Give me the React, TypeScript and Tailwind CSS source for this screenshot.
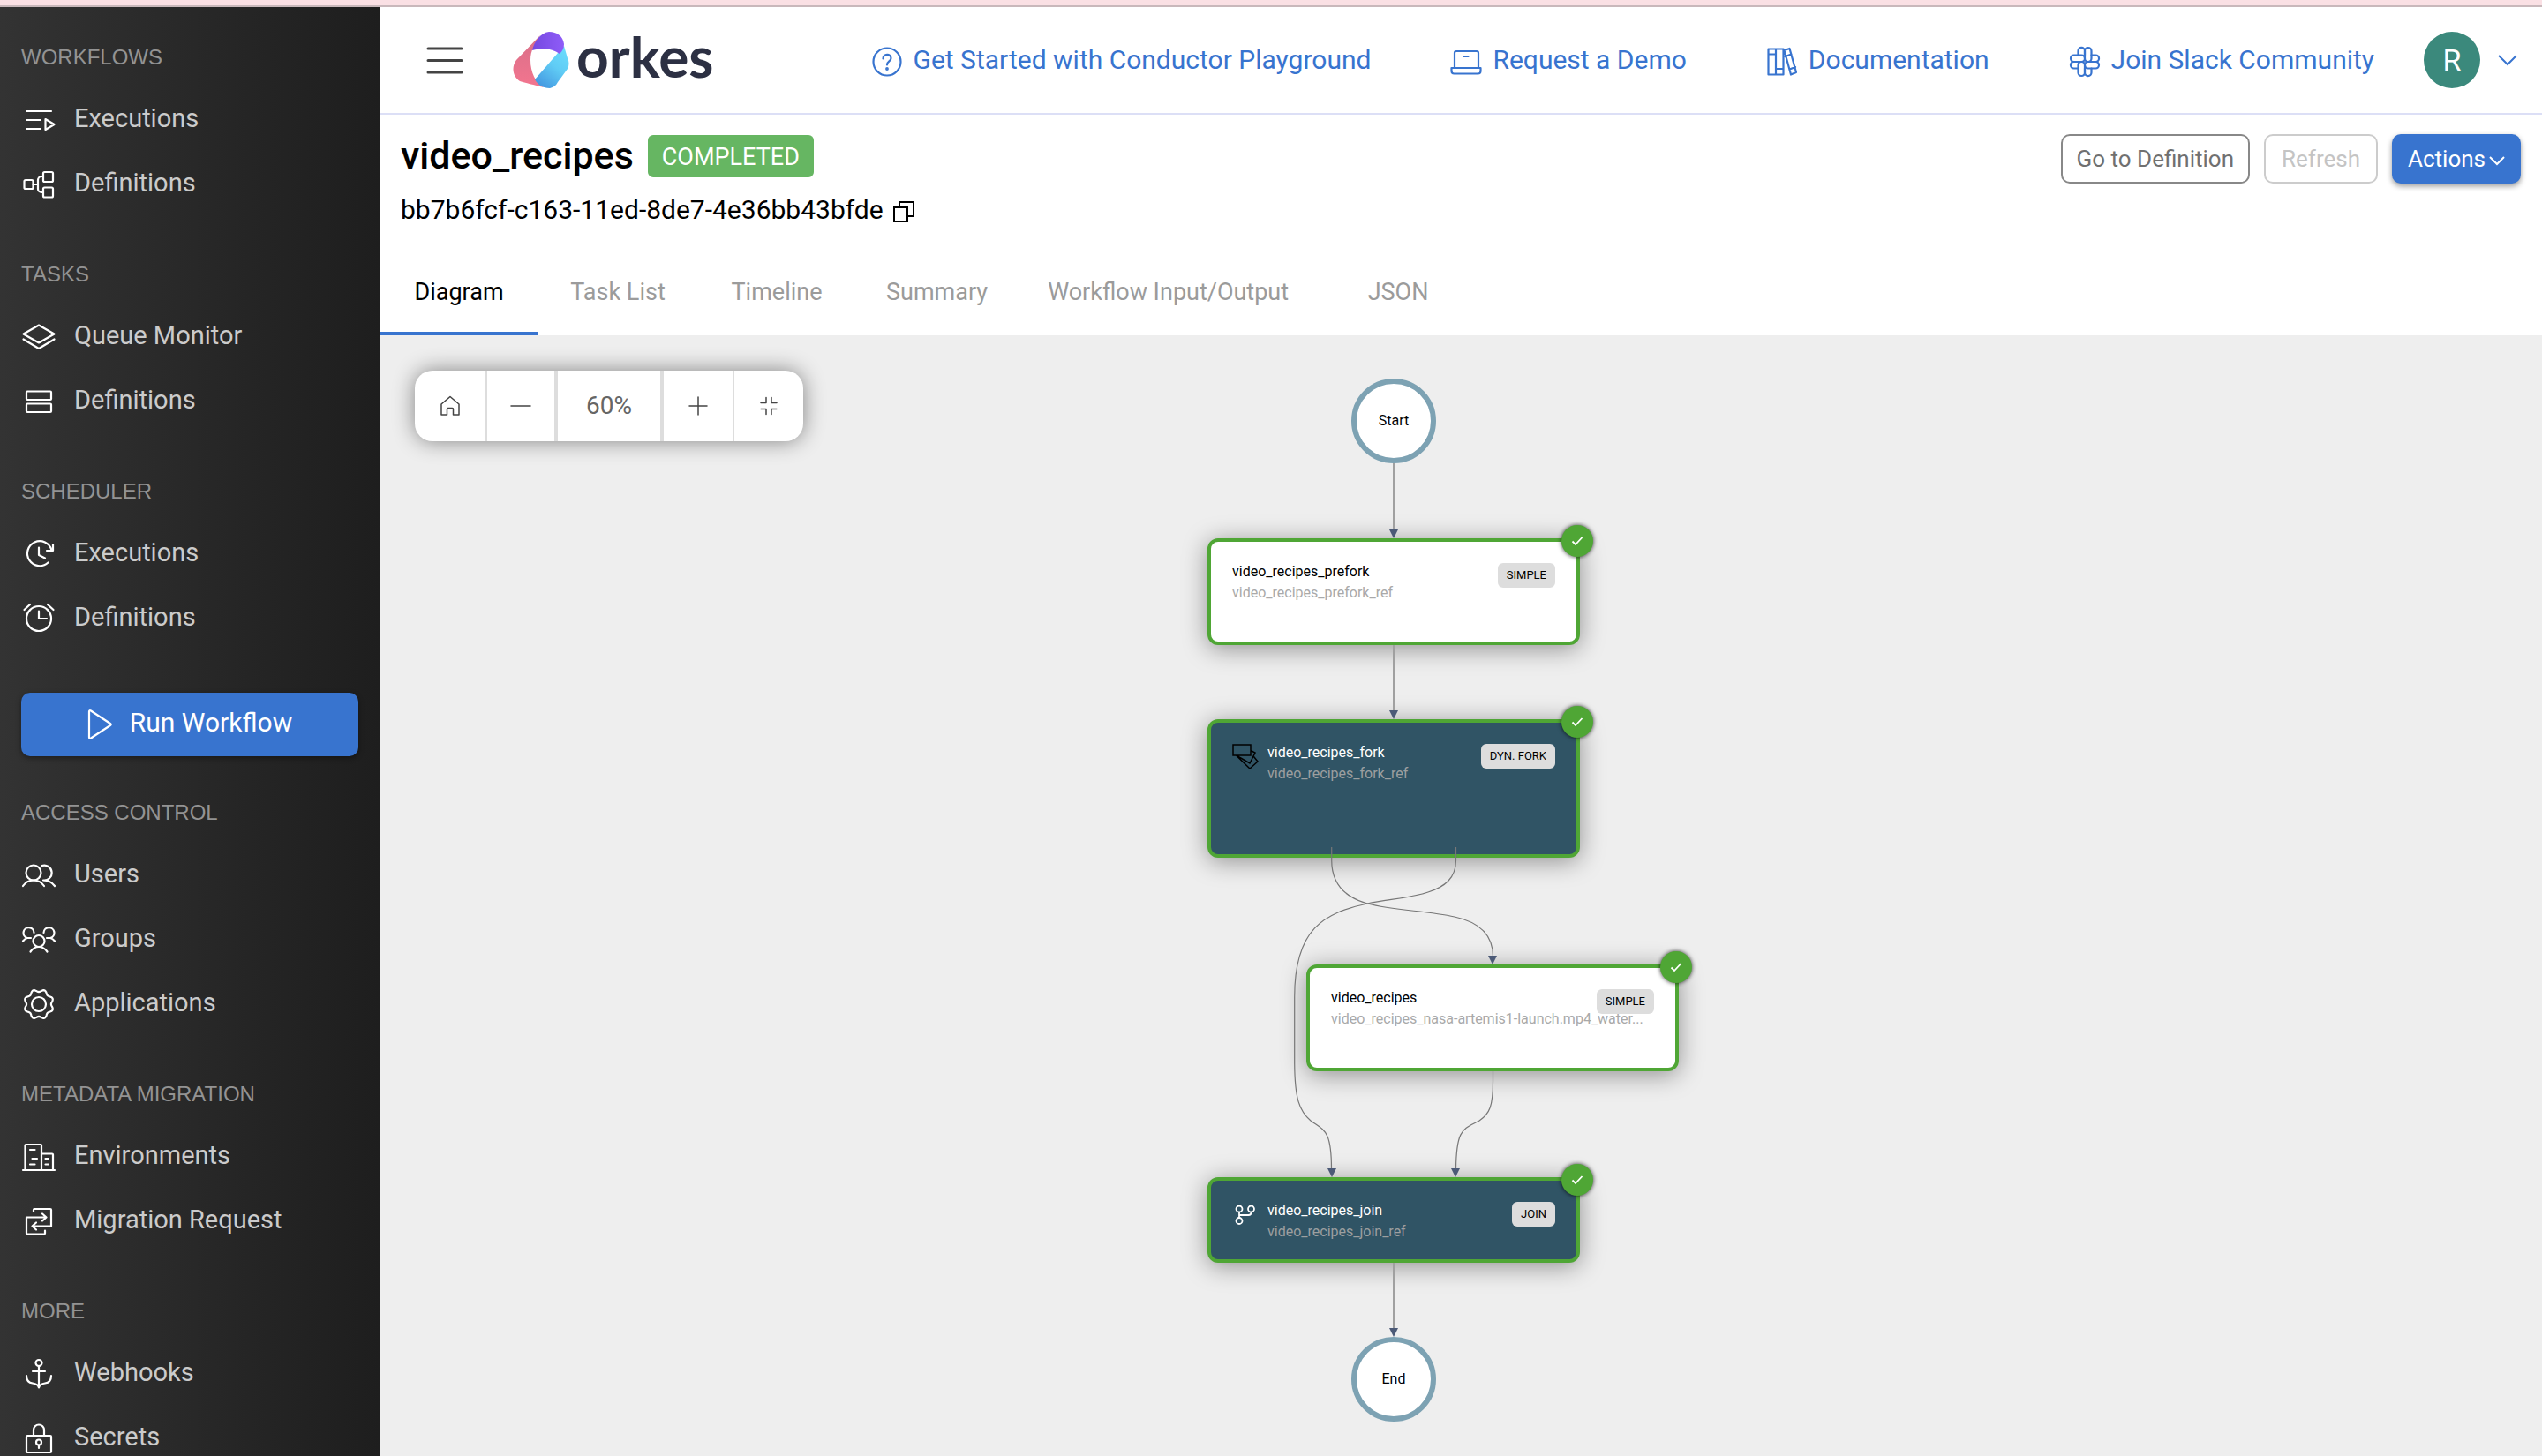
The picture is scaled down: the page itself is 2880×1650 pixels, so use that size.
import React from "react";

type IconProps = { children: React.ReactNode; className?: string; box?: string; weight?: number };

function Icon({ children, className = "size-10", box = "0 0 40 40", weight = 2.2 }: IconProps) {
  return (
    <svg viewBox={box} className={"shrink-0 " + className} fill="none" stroke="currentColor" strokeWidth={weight} strokeLinecap="round" strokeLinejoin="round" aria-hidden="true">
      {children}
    </svg>
  );
}

const gearPath =
  Array.from({ length: 96 }, (_, i) => {
    const a = (i / 96) * Math.PI * 2;
    const r = 15.4 + 1.5 * Math.cos(8 * a + Math.PI);
    return (i ? "L" : "M") + (20 + r * Math.cos(a)).toFixed(2) + " " + (20 + r * Math.sin(a)).toFixed(2);
  }).join("") + "Z";

const icons = {
  runs: <path d="M6 10H34M6 20H22M6 30H22M27.5 19L37.5 25L27.5 31Z" />,
  flow: (
    <>
      <rect x="3.5" y="15" width="10" height="10" rx="1.5" />
      <rect x="25" y="6" width="11" height="11" rx="1.5" />
      <rect x="25" y="23.5" width="11" height="11" rx="1.5" />
      <path d="M13.5 20H19M25 11H23a4 4 0 0 0-4 4V25a4 4 0 0 0 4 4H25" />
    </>
  ),
  layers: <path d="M20 6.500L37.500 16.500L20 26.500L2.500 16.500ZM2.500 22.500L20 33L37.500 22.500" />,
  rows: (
    <>
      <rect x="6" y="8.500" width="28" height="9.500" rx="1" />
      <rect x="6" y="22.500" width="28" height="9.500" rx="1" />
    </>
  ),
  rerun: <path d="M30.500 29.500A14 14 0 1 1 34.500 15.500M36 9V16H29M20 12.500V21L27 24.500" />,
  alarm: (
    <>
      <circle cx="20" cy="20" r="14" />
      <path d="M20 11.500V20H29M3.500 10L10 4M30 4L36.500 10" />
    </>
  ),
  users: (
    <>
      <circle cx="14" cy="17" r="8.500" />
      <path d="M2 32C5 27.500 9 25.500 14 25.500S23 27.500 26 32M23.500 9a8.500 8.500 0 1 1 1.500 16.500M25 25.500C31 25.500 35 28 38 32" />
    </>
  ),
  groups: (
    <>
      <circle cx="20" cy="21.500" r="6.500" />
      <path d="M10.500 33.500C13 30 16 28 20 28S27 30 29.500 33.500" />
      <path d="M14.500 12A6 6 0 1 0 7 18C5 18.500 3.500 19.500 2 21.500M7 18H11" />
      <path d="M25.500 12A6 6 0 1 1 33 18C35 18.500 36.500 19.500 38 21.500M33 18H29" />
    </>
  ),
  gear: (
    <>
      <path d={gearPath} />
      <circle cx="20" cy="20" r="8" />
    </>
  ),
  buildings: <path d="M2 35H38M4.500 35V7a1 1 0 0 1 1-1H22a1 1 0 0 1 1 1V35M23 16.500H35a1 1 0 0 1 1 1V35M10 12H15.500M12.500 22H18M10 28.500H15.500M27.500 22H31M27.500 28.500H31" />,
  migrate: <path d="M14 9V7a1 1 0 0 1 1-1H33a1 1 0 0 1 1 1V25.500H13M17 21.500L12.500 25.500L17 29.500M27 30.500V33.500a1 1 0 0 1-1 1H7a1 1 0 0 1-1-1V15.500H28M24 11.500L28.500 15.500L24 19.500" />,
  anchor: (
    <>
      <circle cx="20" cy="7.500" r="3.500" />
      <path d="M20 11V35M13 17H27M6 22C6 27 8.500 30 13 30.500C17 31 19 32 20 35.500C21 32 23 31 27 30.500C31.500 30 34 27 34 22" />
    </>
  ),
  lock: (
    <>
      <rect x="6" y="17" width="28" height="19" rx="1" />
      <path d="M14 17V10.500a6 6 0 0 1 12 0V17M20 27.500V31" />
      <circle cx="20" cy="24.500" r="3" />
    </>
  ),
};

type IconName = keyof typeof icons;
type Section = { title: string; items: [IconName, string][] };

const upper: Section[] = [
  { title: "WORKFLOWS", items: [["runs", "Executions"], ["flow", "Definitions"]] },
  { title: "TASKS", items: [["layers", "Queue Monitor"], ["rows", "Definitions"]] },
  { title: "SCHEDULER", items: [["rerun", "Executions"], ["alarm", "Definitions"]] },
];

const lower: Section[] = [
  { title: "ACCESS CONTROL", items: [["users", "Users"], ["groups", "Groups"], ["gear", "Applications"]] },
  { title: "METADATA MIGRATION", items: [["buildings", "Environments"], ["migrate", "Migration Request"]] },
  { title: "MORE", items: [["anchor", "Webhooks"], ["lock", "Secrets"]] },
];

function NavSection({ title, items }: Section) {
  return (
    <section>
      <h2 className="mb-[18px] h-8 font-['Liberation_Sans',sans-serif] text-2xl leading-8 text-[#939393]">{title}</h2>
      <ul>
        {items.map(([icon, label]) => (
          <li key={label}>
            <a href="#" className="flex h-[73px] items-center gap-5 text-[#cbcbcb]">
              <Icon className="size-10 text-white">{icons[icon]}</Icon>
              <span className="pb-1 text-[29px] leading-10">{label}</span>
            </a>
          </li>
        ))}
      </ul>
    </section>
  );
}

function Sidebar() {
  return (
    <nav className="flex w-[430px] shrink-0 flex-col gap-[50px] overflow-hidden bg-linear-to-r from-[#333333] to-[#1e1e1e] px-6 pt-[41px]">
      {upper.map((s) => <NavSection key={s.title} {...s} />)}
      <button type="button" className="-my-0.5 flex h-18 shrink-0 items-center justify-center gap-5 rounded-[10px] bg-[#3874cf] text-[30px] text-white shadow-[0_2px_6px_rgba(0,0,0,0.4)]">
        <Icon className="h-9 w-7" box="0 0 28 36"><path d="M2 3.500C2 2 3 2 4 2.500L26 17C27 17.700 27 18.300 26 19L4 33.500C3 34 2 34 2 32.500Z" /></Icon>
        <span className="pb-1.5">Run Workflow</span>
      </button>
      {lower.map((s) => <NavSection key={s.title} {...s} />)}
    </nav>
  );
}

function Logo() {
  return (
    <a href="#" className="flex items-center gap-2" aria-label="orkes">
      <svg viewBox="0 0 64 64" className="size-16" aria-hidden="true">
        <defs>
          <linearGradient id="logo-blue" x1="0.2" y1="1" x2="0.8" y2="0">
            <stop offset="0" stopColor="#4396e0" />
            <stop offset="0.55" stopColor="#60ccf5" />
            <stop offset="1" stopColor="#6bdcfc" />
          </linearGradient>
          <linearGradient id="logo-pink" x1="0" y1="0" x2="0" y2="1">
            <stop offset="0" stopColor="#d86f88" />
            <stop offset="1" stopColor="#f3758f" />
          </linearGradient>
          <linearGradient id="logo-violet" x1="0" y1="0" x2="1" y2="0">
            <stop offset="0" stopColor="#7549e0" />
            <stop offset="1" stopColor="#8f5cf8" />
          </linearGradient>
        </defs>
        <path d="M31 4L4 32C-2 40 0 51 8 56C14 58 24 60 35 63C26 58 20 46 20 32C20 27 21 22 23 19Z" fill="url(#logo-pink)" />
        <path d="M58 16L25 54C28 60 34 64 42 64C46 63 49 61 51 57L62 42C64 38 64 34 62 30Z" fill="url(#logo-blue)" />
        <path d="M22 21C24 12 31 1 41 0C50 0 57 5 58 14C58 19 56 22 53 25C45 19 34 18 22 21Z" fill="url(#logo-violet)" />
      </svg>
      <span className="pb-2 font-['Lato',sans-serif] text-[64px] leading-16 font-bold text-[#2c3043]">orkes</span>
    </a>
  );
}

const links = [
  {
    label: "Get Started with Conductor Playground",
    icon: (
      <>
        <circle cx="18" cy="18" r="15.500" />
        <path d="M13.500 14.500C13.500 8.500 22.500 8.500 22.500 14C22.500 17.500 18 17.500 18 21.500" />
        <circle cx="18" cy="26" r="0.800" fill="currentColor" />
      </>
    ),
  },
  {
    label: "Request a Demo",
    icon: <path d="M5 25V8a2 2 0 0 1 2-2H30a2 2 0 0 1 2 2V25M1.500 25H34.500V28.500a3 3 0 0 1-3 3H4.500a3 3 0 0 1-3-3ZM15.500 12H20.500" />,
  },
  {
    label: "Documentation",
    icon: <path d="M2.500 3.500H11V32.500H2.500ZM11 3.500H19.500V32.500H11ZM2.500 9.500H11M11 26H19.500M20.500 5L26.500 3L34 30L28 32.500ZM21.500 12L28.500 9.500M26.500 26.500L33 24" />,
  },
  {
    label: "Join Slack Community",
    icon: (
      <>
        <rect x="18" y="2" width="7.500" height="16" rx="3.700" />
        <rect x="10.500" y="18" width="7.500" height="16" rx="3.700" />
        <rect x="2" y="10.500" width="16" height="7.500" rx="3.700" />
        <rect x="18" y="18" width="16" height="7.500" rx="3.700" />
        <path d="M18 10.500V5.700a3.700 3.700 0 0 0-7.500 0V10.500M18 25.500V30.300a3.700 3.700 0 0 0 7.500 0V25.500M25.500 18H30.300a3.700 3.700 0 0 0 0-7.500H25.500M10.500 18H5.700a3.700 3.700 0 0 0 0 7.500H10.500" />
      </>
    ),
  },
];

function Header() {
  return (
    <header className="flex h-[122px] shrink-0 items-center border-b-2 border-[#dcdff6] pr-6 pl-[53px]">
      <button type="button" aria-label="Toggle menu" className="mr-14 text-[#444444]">
        <svg viewBox="0 0 42 32" className="h-8 w-[42px]" stroke="currentColor" strokeWidth="3" strokeLinecap="round" aria-hidden="true">
          <path d="M2 3H40M2 16.500H40M2 30H40" />
        </svg>
      </button>
      <Logo />
      <div className="ml-auto flex items-center gap-[90px] text-[#3874cf]">
        {links.map((l) => (
          <a key={l.label} href="#" className="flex items-center gap-3 text-[30px] leading-10">
            <Icon className="mt-1 size-9" box="0 0 36 36">{l.icon}</Icon>
            <span>{l.label}</span>
          </a>
        ))}
      </div>
      <button type="button" aria-label="Account" className="ml-14 flex items-center gap-5 text-[#3874cf]">
        <span className="grid size-16 place-items-center rounded-full bg-[#3b897c] text-[34px] text-white">R</span>
        <svg viewBox="0 0 22 14" className="mr-1 h-3.5 w-[22px]" fill="none" stroke="currentColor" strokeWidth="2" aria-hidden="true">
          <path d="M1 2L11 12L21 2" />
        </svg>
      </button>
    </header>
  );
}

const tabs = ["Diagram", "Task List", "Timeline", "Summary", "Workflow Input/Output", "JSON"];

function Summary() {
  return (
    <div className="flex h-[250px] shrink-0 flex-col justify-between">
      <div className="flex items-start justify-between pt-[22px] pr-6 pl-6">
        <div>
          <div className="flex items-center gap-4">
            <h1 className="pb-0.5 text-[43px] leading-12 font-medium text-black">video_recipes</h1>
            <span className="flex h-12 items-center rounded-md bg-[#66b662] px-4 pt-0.5 text-[27px] text-white">COMPLETED</span>
          </div>
          <div className="mt-4 flex items-center gap-2.5 text-[30px] leading-10 text-black">
            <span>bb7b6fcf-c163-11ed-8de7-4e36bb43bfde</span>
            <button type="button" aria-label="Copy workflow id" className="pt-1">
              <svg viewBox="0 0 26 26" className="size-[26px]" fill="none" stroke="currentColor" strokeWidth="2" aria-hidden="true">
                <path d="M2 8H17V24H2ZM8 8V2H24V18H17" />
              </svg>
            </button>
          </div>
        </div>
        <div className="flex gap-4 text-[26px]">
          <button type="button" className="h-14 rounded-[10px] border-2 border-[#888888] px-4 text-[#707070]">Go to Definition</button>
          <button type="button" disabled className="h-14 rounded-[10px] border-2 border-[#cccccc] px-[18px] text-[#c4c4c4]">Refresh</button>
          <button type="button" className="flex h-14 items-center gap-1 rounded-[10px] bg-[#3874cf] px-[18px] text-white shadow-[0_3px_6px_rgba(0,0,0,0.4)]">
            Actions
            <svg viewBox="0 0 18 12" className="mt-1 h-3 w-[18px]" fill="none" stroke="currentColor" strokeWidth="2" aria-hidden="true">
              <path d="M1 2L9 10L17 2" />
            </svg>
          </button>
        </div>
      </div>
      <div role="tablist" className="flex">
        {tabs.map((t, i) => (
          <button
            key={t}
            type="button"
            role="tab"
            aria-selected={i === 0}
            className={
              "h-24 min-w-[180px] border-b-4 px-[34px] pt-0.5 text-[27px] " +
              (i === 0 ? "border-[#3874cf] text-black" : "border-transparent text-[#9b9b9b]")
            }
          >
            {t}
          </button>
        ))}
      </div>
    </div>
  );
}

function ZoomBar() {
  const cell = "grid h-full place-items-center text-[#444444]";
  return (
    <div className="absolute top-10 left-10 flex h-20 overflow-hidden rounded-[20px] bg-white shadow-[0_0_24px_rgba(0,0,0,0.45)]">
      <button type="button" aria-label="Home" className={cell + " w-[82px] border-r-2 border-[#dddddd]"}>
        <Icon className="size-6" box="0 0 24 24" weight={1.5}><path d="M2 10L12 1.500L22 10V22H15.500V15.500a1 1 0 0 0-1-1H9.500a1 1 0 0 0-1 1V22H2Z" /></Icon>
      </button>
      <button type="button" aria-label="Zoom out" className={cell + " w-[76px]"}>
        <Icon className="size-6" box="0 0 24 24" weight={1.5}><path d="M1 12H23" /></Icon>
      </button>
      <output className={cell + " w-[124px] border-x-4 border-[#dddddd] text-[28px]"}>
        <span className="text-[#666666]">60%</span>
      </output>
      <button type="button" aria-label="Zoom in" className={cell + " w-20 border-r-2 border-[#dddddd]"}>
        <Icon className="size-6" box="0 0 24 24" weight={1.5}><path d="M2 12H22M12 2V22" /></Icon>
      </button>
      <button type="button" aria-label="Fit to screen" className={cell + " w-[78px]"}>
        <Icon className="size-6" box="0 0 24 24" weight={1.5}><path d="M3 8.500H9V2.500M21 8.500H15V2.500M3 15.500H9V21.500M21 15.500H15V21.500" /></Icon>
      </button>
    </div>
  );
}

type TaskNode = { name: string; reference: string; kind: string; place: string; dark?: boolean; icon?: React.ReactNode };

const nodes: TaskNode[] = [
  { name: "video_recipes_prefork", reference: "video_recipes_prefork_ref", kind: "SIMPLE", place: "left-[938px] top-[230px] h-[121px]" },
  {
    name: "video_recipes_fork",
    reference: "video_recipes_fork_ref",
    kind: "DYN. FORK",
    place: "left-[938px] top-[435px] h-[157px]",
    dark: true,
    icon: (
      <svg viewBox="0 0 30 30" className="size-[30px] text-black" fill="none" stroke="currentColor" strokeWidth="1.500" aria-hidden="true">
        <path d="M1 1H21V13H1ZM21 7.500L26 10L20 22L4.500 13M24.500 14.500L29 20L20 28L5 13.500" />
      </svg>
    ),
  },
  { name: "video_recipes", reference: "video_recipes_nasa-artemis1-launch.mp4_water...", kind: "SIMPLE", place: "left-[1050px] top-[713px] h-[121px]" },
  {
    name: "video_recipes_join",
    reference: "video_recipes_join_ref",
    kind: "JOIN",
    place: "left-[938px] top-[954px] h-[97px]",
    dark: true,
    icon: (
      <svg viewBox="0 0 30 30" className="size-[30px] text-white" fill="none" stroke="currentColor" strokeWidth="1.800" aria-hidden="true">
        <circle cx="8" cy="8" r="3.500" />
        <circle cx="21.500" cy="8" r="3.500" />
        <circle cx="8" cy="21.500" r="3.500" />
        <path d="M8 11.500V18M8 15H18.500a3 3 0 0 0 3-3V11.500" />
      </svg>
    ),
  },
];

function Task({ name, reference, kind, place, dark, icon }: TaskNode) {
  return (
    <article
      className={
        "absolute flex w-[422px] items-start gap-2.5 rounded-xl border-4 border-[#4fa635] px-6 pt-[22px] shadow-[0_4px_28px_rgba(0,0,0,0.4)] " +
        place + (dark ? " bg-[#305465]" : " bg-white")
      }
    >
      {icon && <span className="mt-0.5">{icon}</span>}
      <div className="text-base leading-6 whitespace-nowrap">
        <h3 className={dark ? "text-white" : "text-black"}>{name}</h3>
        <p className={dark ? "text-[#9c9fa0]" : "text-[#a9a9a9]"}>{reference}</p>
      </div>
      <span className="absolute top-6 right-6 h-7 rounded-md bg-[#dddddd] px-2.5 text-[13px] leading-7 text-black">{kind}</span>
      <span className="absolute -top-[19px] -right-[19px] grid size-9 place-items-center rounded-full bg-[#4fa635] text-white shadow-[0_0_5px_rgba(0,0,0,0.8)]">
        <svg viewBox="0 0 14 12" className="h-3 w-3.5" fill="none" stroke="currentColor" strokeWidth="1.800" aria-hidden="true">
          <path d="M1.500 6.500L5 10L12.500 2" />
        </svg>
      </span>
    </article>
  );
}

const heads = [[1149, 230], [1149, 435], [1261, 713], [1079, 954], [1219, 954], [1149, 1135]];

function Diagram() {
  const terminal = "absolute grid size-24 place-items-center rounded-full border-6 border-[#7da2b3] bg-white text-base text-black";
  return (
    <main className="relative min-h-0 flex-1 overflow-hidden bg-[#eeeeee]">
      <div className={terminal + " top-[49px] left-[1101px]"}>Start</div>
      {nodes.map((n) => <Task key={n.name} {...n} />)}
      <div className={terminal + " top-[1135px] left-[1101px]"}>End</div>
      <svg viewBox="0 0 1400 1240" className="pointer-events-none absolute top-0 left-0 h-[1240px] w-[1400px]" fill="none" aria-hidden="true">
        <g stroke="#a0a0a0" strokeWidth="2">
          <path d="M1149 145V222M1149 351V427M1149 1051V1127" />
        </g>
        <g stroke="#777777" strokeWidth="1.200">
          <path d="M1078.700 580V595C1078.700 622 1094 637 1119.300 644C1150 652 1186 652 1218 659C1246 665 1261.500 679 1261.500 704" />
          <path d="M1219.500 580V595C1219.500 615 1207 625 1188 631C1167 638 1143 639 1119 644C1070 655 1036.700 672 1036.700 750V825C1037 865 1042 879 1055 890C1070 901 1078.500 900 1078.500 945" />
          <path d="M1261.500 834V845C1261.500 873 1258 882 1246 890C1228 900 1220 898 1219.500 945" />
        </g>
        <g fill="#4c5a77">
          {heads.map(([x, y]) => <path key={x + "-" + y} d={`M${x - 5} ${y - 10}H${x + 5}L${x} ${y}Z`} />)}
        </g>
      </svg>
      <ZoomBar />
    </main>
  );
}

export default function App() {
  return (
    <div className="flex h-screen flex-col bg-white font-['Roboto',sans-serif]">
      <div className="h-2 shrink-0 border-b-2 border-[#c9b8bb] bg-[#fae0e4]" />
      <div className="flex min-h-0 flex-1">
        <Sidebar />
        <div className="flex min-w-0 flex-1 flex-col">
          <Header />
          <Summary />
          <Diagram />
        </div>
      </div>
    </div>
  );
}
